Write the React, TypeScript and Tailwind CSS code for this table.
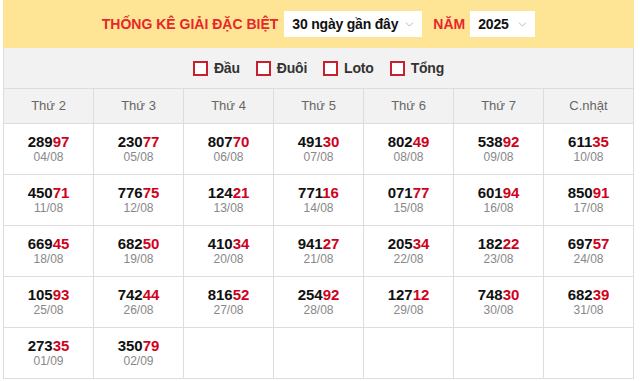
import { ChevronDown } from 'lucide-react'

type Cell = { num: string; date: string } | null

const days = ['Thứ 2', 'Thứ 3', 'Thứ 4', 'Thứ 5', 'Thứ 6', 'Thứ 7', 'C.nhật']

const rows: Cell[][] = [
  [
    { num: '28997', date: '04/08' },
    { num: '23077', date: '05/08' },
    { num: '80770', date: '06/08' },
    { num: '49130', date: '07/08' },
    { num: '80249', date: '08/08' },
    { num: '53892', date: '09/08' },
    { num: '61135', date: '10/08' }
  ],
  [
    { num: '45071', date: '11/08' },
    { num: '77675', date: '12/08' },
    { num: '12421', date: '13/08' },
    { num: '77116', date: '14/08' },
    { num: '07177', date: '15/08' },
    { num: '60194', date: '16/08' },
    { num: '85091', date: '17/08' }
  ],
  [
    { num: '66945', date: '18/08' },
    { num: '68250', date: '19/08' },
    { num: '41034', date: '20/08' },
    { num: '94127', date: '21/08' },
    { num: '20534', date: '22/08' },
    { num: '18222', date: '23/08' },
    { num: '69757', date: '24/08' }
  ],
  [
    { num: '10593', date: '25/08' },
    { num: '74244', date: '26/08' },
    { num: '81652', date: '27/08' },
    { num: '25492', date: '28/08' },
    { num: '12712', date: '29/08' },
    { num: '74830', date: '30/08' },
    { num: '68239', date: '31/08' }
  ],
  [
    { num: '27335', date: '01/09' },
    { num: '35079', date: '02/09' },
    null,
    null,
    null,
    null,
    null
  ]
]

const filters = ['Đầu', 'Đuôi', 'Loto', 'Tổng']

const Select = ({ label, width }: { label: string; width: string }) => (
  <div className={`flex h-[26px] items-center justify-between bg-white pl-[8px] pr-[6px] ${width}`}>
    <span className="text-[14px] font-bold tracking-[-0.2px] text-[#111]">{label}</span>
    <ChevronDown className="h-[13px] w-[13px] text-[#aaa]" strokeWidth={1.5} />
  </div>
)

export default function App() {
  return (
    <div className="bg-white pl-[3px] font-['Liberation_Sans',Arial,sans-serif]" style={{ width: 640, height: 381 }}>
      <div className="w-[631px]">
        {/* tiêu đề */}
        <div className="flex h-[48px] items-center justify-center gap-[6px] bg-[#fee595]">
          <span className="text-[14px] font-bold text-[#e8262b]">THỐNG KÊ GIẢI ĐẶC BIỆT</span>
          <Select label="30 ngày gần đây" width="w-[138px]" />
          <span className="ml-[5px] mr-[-1px] text-[14px] font-bold text-[#e8262b]">NĂM</span>
          <Select label="2025" width="w-[65px]" />
        </div>

        {/* bộ lọc */}
        <div className="flex h-[40px] items-center justify-center gap-[16px] border-x border-[#ddd] bg-[#f2f2f2]">
          {filters.map((f) => (
            <label key={f} className="flex items-center gap-[6px]">
              <span className="block h-[15px] w-[15px] border-2 border-[#c8202f] bg-white" />
              <span className="text-[14px] font-bold tracking-[-0.2px] text-[#333]">{f}</span>
            </label>
          ))}
        </div>

        {/* bảng */}
        <div className="grid grid-cols-[repeat(7,90px)] border-l border-t border-[#ddd]">
          {days.map((d) => (
            <div
              key={d}
              className="flex h-[35px] items-center justify-center border-b border-r border-[#ddd] bg-[#f2f2f2] text-[13px] text-[#666]"
            >
              {d}
            </div>
          ))}
          {rows.flat().map((c, i) => (
            <div
              key={i}
              className="flex h-[51px] flex-col items-center justify-center border-b border-r border-[#ddd] bg-white pb-[1px]"
            >
              {c ? (
                <>
                  <span className="text-[15px] font-bold leading-[17px] text-[#111]">
                    {c.num.slice(0, 3)}
                    <span className="text-[#d0021b]">{c.num.slice(3)}</span>
                  </span>
                  <span className="text-[12px] leading-[15px] text-[#888]">{c.date}</span>
                </>
              ) : null}
            </div>
          ))}
        </div>
      </div>
    </div>
  )
}
